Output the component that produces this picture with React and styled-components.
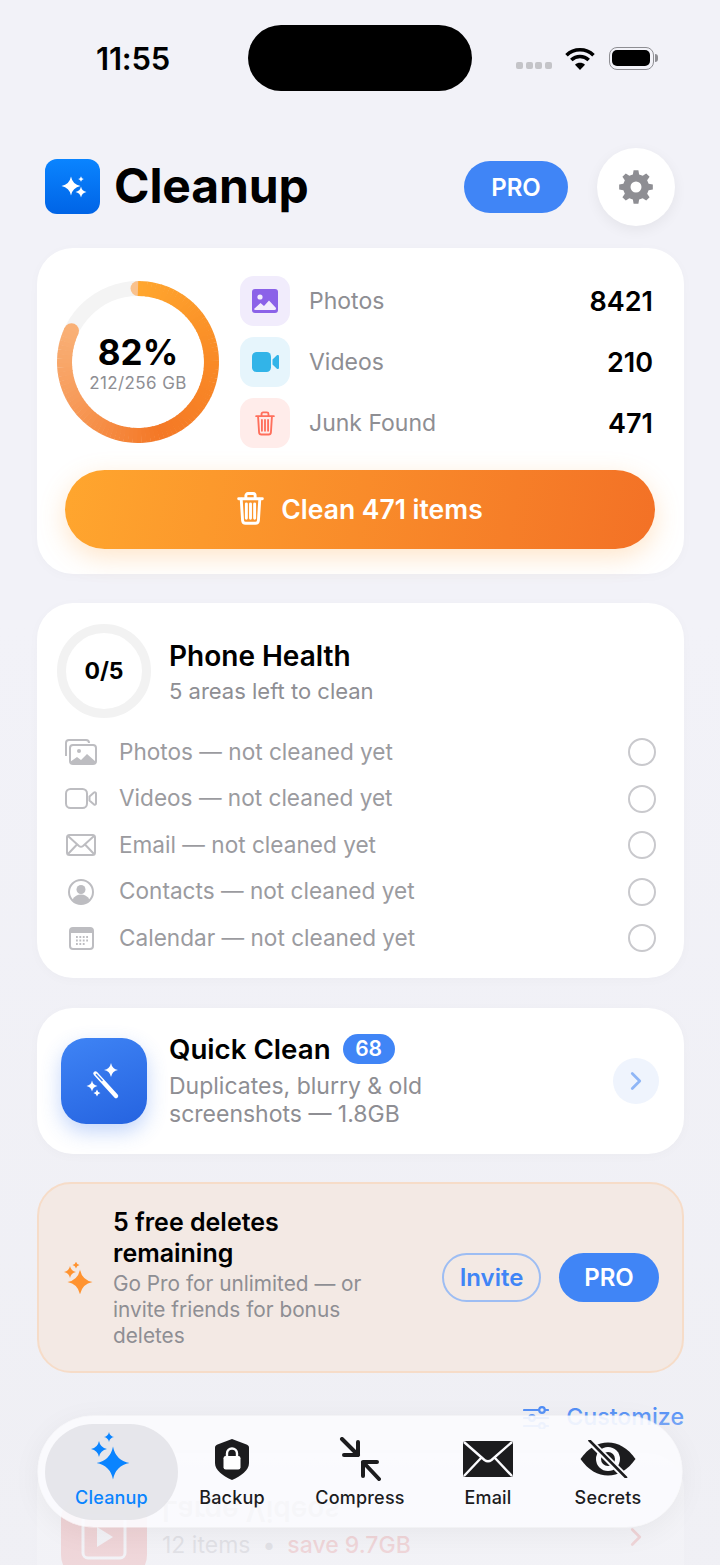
import React from 'react';
import styled, { createGlobalStyle } from 'styled-components';
import { ChevronRight } from 'lucide-react';

const GlobalStyle = createGlobalStyle`
  html, body {
    margin: 0;
    padding: 0;
    background: #f2f2f7;
    font-family: 'Inter', 'Liberation Sans', sans-serif;
    -webkit-font-smoothing: antialiased;
  }
  * { box-sizing: border-box; }
`;

const Screen = styled.div`
  position: relative;
  width: 720px;
  height: 1565px;
  overflow: hidden;
  background: linear-gradient(180deg, #f2f2f8 0%, #f2f2f8 40%, #efeff4 100%);
`;

/* status bar */
const StatusBar = styled.div`
  display: flex;
  align-items: center;
  height: 66px;
  margin-top: 25px;
  padding-left: 96px;
`;

const Time = styled.div`
  width: 74px;
  font-size: 31px;
  font-weight: 600;
  color: #000;
  white-space: nowrap;
  letter-spacing: -0.2px;
`;

const Island = styled.div`
  width: 224px;
  height: 66px;
  margin-left: 78px;
  margin-right: 44px;
  border-radius: 33px;
  background: #000;
`;

const SignalDots = styled.div`
  display: flex;
  gap: 2.5px;
  margin-top: 15px;
  margin-right: 13px;
`;

const SignalDot = styled.span`
  width: 7px;
  height: 7px;
  border-radius: 2px;
  background: #c4c4c8;
`;

const Battery = styled.div`
  display: flex;
  align-items: center;
  margin-left: 14px;
`;

const BatteryShell = styled.div`
  width: 45px;
  height: 23px;
  padding: 2.5px;
  border: 1.5px solid #8e8e93;
  border-radius: 8px;
`;

const BatteryFill = styled.div`
  width: 100%;
  height: 100%;
  border-radius: 5px;
  background: #000;
`;

const BatteryTip = styled.div`
  width: 3px;
  height: 8px;
  margin-left: 1px;
  border-radius: 0 3px 3px 0;
  background: #8e8e93;
`;

/* header */
const Header = styled.header`
  display: flex;
  align-items: center;
  height: 78px;
  margin-top: 57px;
  padding: 0 45px;
`;

const Logo = styled.div`
  display: flex;
  align-items: center;
  justify-content: center;
  width: 55px;
  height: 55px;
  margin-bottom: 2px;
  border-radius: 12px;
  background: linear-gradient(180deg, #0a84ff 0%, #0064e6 100%);
`;

const AppTitle = styled.h1`
  margin: 0 0 4px 14px;
  font-size: 48px;
  font-weight: 700;
  letter-spacing: -0.1px;
  color: #000;
`;

const ProPill = styled.button`
  width: ${(p) => p.$width}px;
  height: ${(p) => p.$height}px;
  margin-left: ${(p) => p.$auto ? 'auto' : '0'};
  padding: 0;
  border: none;
  border-radius: 26px;
  background: #4085f6;
  color: #fff;
  font-family: inherit;
  font-size: 24px;
  font-weight: 600;
`;

const GearButton = styled.div`
  display: flex;
  align-items: center;
  justify-content: center;
  width: 78px;
  height: 78px;
  margin-left: 29px;
  border-radius: 50%;
  background: #fff;
  box-shadow: 0 4px 14px rgba(0, 0, 0, 0.06);
`;

/* cards */
const Stack = styled.main`
  display: flex;
  flex-direction: column;
  gap: 29px;
  margin-top: 22px;
  padding: 0 36px 0 37px;
`;

const Card = styled.section`
  border-radius: 36px;
  background: #fff;
  box-shadow: 0 2px 12px rgba(0, 0, 0, 0.025);
`;

const StorageCard = styled(Card)`
  height: 326px;
  padding: 28px 29px 0 28px;
`;

const StorageTop = styled.div`
  display: flex;
  align-items: center;
  margin-left: -8px;
  padding-right: 2px;
`;

const RingBox = styled.div`
  position: relative;
  flex: none;
  width: ${(p) => p.$size}px;
  height: ${(p) => p.$size}px;
`;

const RingCenter = styled.div`
  position: absolute;
  inset: 0;
  display: flex;
  flex-direction: column;
  align-items: center;
  justify-content: center;
`;

const Percent = styled.div`
  font-size: 35px;
  line-height: 42px;
  font-weight: 700;
  color: #000;
`;

const UsedText = styled.div`
  font-size: 17px;
  line-height: 20px;
  color: #8e8e93;
  letter-spacing: 0.4px;
`;

const Stats = styled.div`
  display: flex;
  flex-direction: column;
  gap: 11px;
  flex: 1;
  margin-left: 21px;
`;

const StatRow = styled.div`
  display: flex;
  align-items: center;
  height: 50px;
`;

const StatTile = styled.div`
  display: flex;
  align-items: center;
  justify-content: center;
  width: 50px;
  height: 50px;
  border-radius: 14px;
  background: ${(p) => p.$bg};
`;

const StatLabel = styled.div`
  margin-left: 19px;
  font-size: 23px;
  color: #8e8e93;
`;

const StatValue = styled.div`
  margin-left: auto;
  font-size: 27px;
  font-weight: 600;
  color: #000;
`;

const CleanButton = styled.button`
  display: flex;
  align-items: center;
  justify-content: center;
  gap: 17px;
  width: 590px;
  height: 79px;
  margin-top: 22px;
  padding: 0 0 2px;
  border: none;
  border-radius: 40px;
  background: linear-gradient(100deg, #ffa62e 0%, #f37126 100%);
  box-shadow: 0 8px 26px rgba(255, 160, 60, 0.28);
  color: #fff;
  font-family: inherit;
  font-size: 26.5px;
  font-weight: 600;
`;

const HealthCard = styled(Card)`
  height: 375px;
  padding: 21px 28px 0 20px;
`;

const HealthTop = styled.div`
  display: flex;
  align-items: center;
  gap: 18px;
`;

const SmallRing = styled.div`
  display: flex;
  align-items: center;
  justify-content: center;
  width: 94px;
  height: 94px;
  border: 9px solid #f2f2f2;
  border-radius: 50%;
  font-size: 23px;
  font-weight: 700;
  color: #000;
`;

const CardTitle = styled.div`
  font-size: 28px;
  line-height: 34px;
  font-weight: 600;
  color: #000;
`;

const HealthSub = styled.div`
  margin-top: 6px;
  font-size: 22px;
  line-height: 25px;
  color: #8e8e93;
`;

const HealthList = styled.div`
  margin-top: 11px;
  padding-left: 8px;
`;

const HealthRow = styled.div`
  display: flex;
  align-items: center;
  height: 46.5px;
`;

const HealthIcon = styled.div`
  display: flex;
  align-items: center;
  justify-content: center;
  width: 32px;
`;

const HealthText = styled.div`
  margin-left: 22px;
  padding-bottom: 2px;
  font-size: 22.6px;
  color: #9b9b9f;
`;

const Radio = styled.div`
  width: 28px;
  height: 28px;
  margin-left: auto;
  border: 2px solid #c9c9cd;
  border-radius: 50%;
`;

const QuickCard = styled(Card)`
  display: flex;
  align-items: center;
  height: 146px;
  margin-top: 1px;
  padding: 0 25px 0 24px;
`;

const QuickIcon = styled.div`
  display: flex;
  align-items: center;
  justify-content: center;
  flex: none;
  width: 86px;
  height: 86px;
  border-radius: 25px;
  background: linear-gradient(160deg, #3f84f5 0%, #2563e0 100%);
  box-shadow: 0 8px 20px rgba(60, 120, 240, 0.3);
`;

const QuickBody = styled.div`
  margin-left: 22px;
`;

const TitleRow = styled.div`
  display: flex;
  align-items: center;
  gap: 12px;
  margin-top: -3px;
`;

const QuickTitle = styled(CardTitle)`
  font-size: 27.7px;
`;

const CountBadge = styled.span`
  display: flex;
  align-items: center;
  justify-content: center;
  width: 52px;
  height: 30px;
  border-radius: 15px;
  background: #4085f6;
  color: #fff;
  font-size: 21px;
  font-weight: 600;
`;

const QuickDesc = styled.div`
  margin-top: 6px;
  font-size: 23px;
  line-height: 28px;
  color: #8e8e93;
`;

const ChevronCircle = styled.div`
  display: flex;
  align-items: center;
  justify-content: center;
  width: 46px;
  height: 46px;
  margin-left: auto;
  margin-top: ${(p) => p.$plain ? '22px' : '0'};
  border-radius: 50%;
  background: ${(p) => p.$plain ? 'transparent' : '#eff4fd'};
  color: ${(p) => p.$plain ? '#e8413a' : '#8fb6f6'};
`;

const Banner = styled.section`
  display: flex;
  align-items: center;
  height: 191px;
  margin-top: -1px;
  padding: 0 23px 0 24px;
  border: 2px solid #f6dcc8;
  border-radius: 34px;
  background: #f3e9e4;
`;

const BannerBody = styled.div`
  width: 262px;
  margin-left: 18px;
`;

const BannerTitle = styled.div`
  font-size: 25px;
  line-height: 31px;
  font-weight: 600;
  color: #000;
`;

const BannerDesc = styled.div`
  margin-top: 2px;
  font-size: 20.8px;
  line-height: 26px;
  color: #8e8e93;
`;

const BannerActions = styled.div`
  display: flex;
  align-items: center;
  gap: 18px;
  margin-left: auto;
`;

const InviteButton = styled.button`
  width: 99px;
  height: 49px;
  padding: 0;
  border: 2px solid #9dbdf3;
  border-radius: 25px;
  background: transparent;
  color: #4085f6;
  font-family: inherit;
  font-size: 24px;
  font-weight: 600;
`;

const CustomizeRow = styled.div`
  display: flex;
  align-items: center;
  justify-content: flex-end;
  gap: 17px;
  height: 30px;
  color: #4a8af6;
  font-size: 23.2px;
  font-weight: 500;
`;

const LargeCard = styled(Card)`
  display: flex;
  align-items: center;
  height: 146px;
  margin-top: -8px;
  padding: 0 25px 0 24px;
`;

const LargeIcon = styled.div`
  display: flex;
  align-items: center;
  justify-content: center;
  flex: none;
  width: 86px;
  height: 86px;
  margin-top: 22px;
  border-radius: 25px;
  background: #e8413a;
`;

const LargeBody = styled.div`
  margin-left: 15px;
`;

const FlippedTitle = styled.div`
  font-size: 28px;
  line-height: 34px;
  font-weight: 600;
  color: #000;
  transform: scaleY(-1);
`;

const LargeMeta = styled.div`
  display: flex;
  align-items: center;
  gap: 12px;
  margin-top: 3px;
  font-size: 23px;
  color: #8e8e93;
`;

const Saving = styled.span`
  color: #e8413a;
  font-weight: 500;
`;

const FadeVeil = styled.div`
  position: absolute;
  left: 0;
  right: 0;
  bottom: 0;
  height: 160px;
  background: linear-gradient(180deg, rgba(240, 240, 245, 0) 0%, rgba(240, 240, 245, 0.35) 16%, rgba(240, 240, 245, 0.82) 60%, rgba(240, 240, 245, 0.86) 100%);
`;

/* floating tab bar */
const TabBar = styled.nav`
  position: absolute;
  left: 38px;
  top: 1416px;
  display: flex;
  width: 644px;
  height: 111px;
  padding: 8px 8px 7px 7px;
  border-radius: 56px;
  background: rgba(251, 251, 254, 0.9);
  box-shadow: 0 0 0 0.5px rgba(255, 255, 255, 0.8), 0 6px 30px rgba(0, 0, 0, 0.05);
`;

const Tab = styled.div`
  display: flex;
  flex-direction: column;
  align-items: center;
  flex: none;
  width: ${(p) => p.$width}px;
  padding-top: ${(p) => p.$active ? 8 : 14}px;
  border-radius: 48px;
  background: ${(p) => p.$active ? 'rgba(225, 225, 230, 0.8)' : 'transparent'};
  color: ${(p) => p.$active ? '#0a84ff' : '#1c1c1e'};
`;

const TabIcon = styled.div`
  display: flex;
  align-items: center;
  justify-content: center;
  height: ${(p) => p.$active ? 48 : 42}px;
`;

const TabLabel = styled.div`
  margin-top: 7px;
  font-size: 18px;
  line-height: 22px;
  font-weight: 500;
  letter-spacing: 0.2px;
`;

// four point sparkle, k is how far the waist sits from the centre
const star = (cx, cy, r, k = 0.16) => {
  const w = r * k;
  return `M${cx} ${cy - r}Q${cx + w} ${cy - w} ${cx + r} ${cy}Q${cx + w} ${cy + w} ${cx} ${cy + r}Q${cx - w} ${cy + w} ${cx - r} ${cy}Q${cx - w} ${cy - w} ${cx} ${cy - r}Z`;
};

const gearPath = () => {
  const teeth = 8;
  const c = 17;
  const points = [];
  for (let i = 0; i < teeth; i++) {
    const a = (i / teeth) * Math.PI * 2;
    const step = Math.PI / teeth;
    [[-0.62, 13], [-0.36, 17], [0.36, 17], [0.62, 13]].forEach(([off, r]) => {
      const t = a + off * step;
      points.push(`${(c + r * Math.sin(t)).toFixed(2)} ${(c - r * Math.cos(t)).toFixed(2)}`);
    });
  }
  const hole = `M${c - 5.5} ${c}a5.5 5.5 0 1 0 11 0a5.5 5.5 0 1 0 -11 0Z`;
  return `M${points.join('L')}Z${hole}`;
};

const Gear = () => (
  <svg width="34" height="34" viewBox="0 0 34 34">
    <path d={gearPath()} fill="#8e8e93" fillRule="evenodd" />
  </svg>
);

const Wifi = () => (
  <svg width="30" height="23" viewBox="0 0 30 23" fill="none" stroke="#000" strokeWidth="3.6">
    <path d="M1.5 8.2C9 1 21 1 28.5 8.2" />
    <path d="M6.3 13C11.2 8.3 18.8 8.3 23.7 13" />
    <path d="M15 23l-5-5.3c2.8-2.6 7.2-2.6 10 0z" fill="#000" stroke="none" />
  </svg>
);

const Sparkles = ({ size, box, color, stars }) => (
  <svg width={size} height={size} viewBox={`0 0 ${box} ${box}`}>
    {stars.map(([x, y, r], i) => <path key={i} d={star(x, y, r)} fill={color} />)}
  </svg>
);

const Trash = ({ width, height, color, strokeWidth }) => (
  <svg width={width} height={height} viewBox="0 0 26 32" fill="none" stroke={color} strokeWidth={strokeWidth} strokeLinecap="round" strokeLinejoin="round">
    <path d="M1.5 6.5h23" />
    <path d="M8.5 6V3.5a2 2 0 0 1 2-2h5a2 2 0 0 1 2 2V6" />
    <path d="M4 7l1.3 20.5a3 3 0 0 0 3 2.8h9.4a3 3 0 0 0 3-2.8L22 7" />
    <path d="M9 11.5v14M13 11.5v14M17 11.5v14" />
  </svg>
);

const PhotoGlyph = () => (
  <svg width="26" height="24" viewBox="0 0 26 24">
    <rect width="26" height="24" rx="3" fill="#8b62e8" />
    <circle cx="8" cy="8" r="2.6" fill="#f3eefc" />
    <path d="M2 20l6.5-6 3.5 3 5-5.5 7 7.5v.5a1.500 1.500 0 0 1-1.500 1.500h-19a1.500 1.500 0 0 1-1.500-1.500z" fill="#f3eefc" />
  </svg>
);

const VideoGlyph = () => (
  <svg width="27" height="20" viewBox="0 0 27 20" fill="#32b4e8">
    <rect width="19" height="20" rx="4.5" />
    <path d="M20.5 7.5l4.4-4.2c.8-.7 2.1-.2 2.1.9v11.6c0 1.1-1.3 1.6-2.1.9l-4.4-4.2z" />
  </svg>
);

const PhotosOutline = () => (
  <svg width="32" height="26" viewBox="0 0 32 26" fill="none" stroke="#bdbdc1" strokeWidth="2">
    <path d="M1 17V4a3 3 0 0 1 3-3h17a3 3 0 0 1 3 3" />
    <rect x="5" y="6" width="26" height="19" rx="3" />
    <circle cx="14" cy="12" r="2" fill="#bdbdc1" stroke="none" />
    <path d="M5 23l7-5 4 3 6-6 9 8v2H5z" fill="#bdbdc1" stroke="none" />
  </svg>
);

const VideoOutline = () => (
  <svg width="32" height="21" viewBox="0 0 32 21" fill="none" stroke="#bdbdc1" strokeWidth="2">
    <rect x="1" y="1" width="21" height="19" rx="4.5" />
    <path d="M24.5 8.5l4.5-4c.8-.6 2-.2 2 .9v10.200c0 1.100-1.200 1.500-2 .9l-4.500-4z" />
  </svg>
);

const MailOutline = () => (
  <svg width="30" height="22" viewBox="0 0 30 22" fill="none" stroke="#bdbdc1" strokeWidth="2">
    <rect x="1" y="1" width="28" height="20" rx="2.500" />
    <path d="M2 2l11 10q2 1.500 4 0L28 2M2 20l9-9.500M28 20l-9-9.500" />
  </svg>
);

const ContactOutline = () => (
  <svg width="26" height="26" viewBox="0 0 26 26">
    <circle cx="13" cy="13" r="12" fill="none" stroke="#bdbdc1" strokeWidth="2" />
    <circle cx="13" cy="10.500" r="4.500" fill="#bdbdc1" />
    <path d="M4.500 20.500c2-3.500 5-5 8.500-5s6.500 1.500 8.500 5C19 23.500 16 25 13 25s-6-1.500-8.500-4.500z" fill="#bdbdc1" />
  </svg>
);

const CalendarOutline = () => (
  <svg width="25" height="23" viewBox="0 0 25 23" fill="none">
    <rect x="1" y="1" width="23" height="21" rx="3" stroke="#bdbdc1" strokeWidth="2" />
    <path d="M1 6V4a3 3 0 0 1 3-3h17a3 3 0 0 1 3 3v2z" fill="#bdbdc1" />
    <path d="M7 10h12M7 13.500h12M7 17h9" stroke="#bdbdc1" strokeWidth="1.800" strokeDasharray="1.800 1.600" />
  </svg>
);

const Wand = () => (
  <svg width="40" height="40" viewBox="0 0 40 40">
    <path d="M11.500 12.500L32 35" stroke="#fff" strokeWidth="4.400" strokeLinecap="round" />
    <path d="M12 13l6.500 7" stroke="#3f80ee" strokeWidth="1.400" />
    <path d={star(27, 9, 7)} fill="#fff" />
    <path d={star(8, 25, 5.500)} fill="#fff" />
    <path d={star(13, 32, 3.500)} fill="#fff" />
  </svg>
);

const Sliders = () => (
  <svg width="26" height="24" viewBox="0 0 26 24" fill="none" stroke="#4a8af6" strokeWidth="2.200" strokeLinecap="round">
    <path d="M1 5h15M22 5h3M1 13h5M12 13h13M1 21h15M22 21h3" />
    <circle cx="19" cy="5" r="2.800" />
    <circle cx="9" cy="13" r="2.800" />
    <circle cx="19" cy="21" r="2.800" />
  </svg>
);

const Shield = () => (
  <svg width="34" height="41" viewBox="0 0 34 41">
    <path d="M17 0l14.500 5.500c1.500.6 2.500 1.500 2.500 3V24c0 7.500-8 13-17 17C8 37 0 31.500 0 24V8.500c0-1.500 1-2.400 2.500-3z" fill="#1c1c1e" />
    <rect x="8.500" y="17" width="17" height="13.500" rx="2.200" fill="#fff" />
    <path d="M12 18v-3.500a5 5 0 0 1 10 0V18" fill="none" stroke="#fff" strokeWidth="2.400" />
  </svg>
);

const CompressIcon = () => (
  <svg width="42" height="44" viewBox="0 0 42 44" fill="none" stroke="#1c1c1e" strokeWidth="4" strokeLinecap="round" strokeLinejoin="round">
    <path d="M3 2l16 16M19 5v13H5" />
    <path d="M40 42L24 25M24 39V25h14" />
  </svg>
);

const EnvelopeFilled = () => (
  <svg width="50" height="36" viewBox="0 0 50 36">
    <rect width="50" height="36" rx="2.500" fill="#1c1c1e" />
    <path d="M1 1l20.500 18q3.500 2.500 7 0L49 1M1 35l17.500-18.500M49 35L31.500 16.500" fill="none" stroke="#fbfbfe" strokeWidth="2.400" />
  </svg>
);

const EyeSlash = () => (
  <svg width="56" height="38" viewBox="0 0 56 38">
    <path d="M0.500 19C8 8 18 2.500 28 2.500S48 8 55.500 19C48 30 38 35.500 28 35.500S8 30 0.500 19z" fill="#1c1c1e" />
    <circle cx="28" cy="19" r="12" fill="#fbfbfe" />
    <circle cx="28" cy="19" r="7" fill="#1c1c1e" />
    <path d="M9 0.500L46 37.500" stroke="#fbfbfe" strokeWidth="6.500" />
    <path d="M9.500 0.500L46 37.500" stroke="#1c1c1e" strokeWidth="2.600" strokeLinecap="round" />
  </svg>
);

const PlayOutline = () => (
  <svg width="46" height="46" viewBox="0 0 46 46" fill="none" stroke="#fff" strokeWidth="3">
    <rect x="2" y="2" width="42" height="42" rx="5" />
    <path d="M16 13l16 10-16 10z" fill="#fff" stroke="none" />
  </svg>
);

// ring colours go around the arc, drawn as short segments since svg has no conic stroke
const ringStops = [
  [0, [255, 166, 46]],
  [0.3, [249, 138, 38]],
  [0.55, [244, 120, 38]],
  [0.8, [247, 155, 90]],
  [1, [249, 176, 118]],
];

const ringColor = (t) => {
  for (let i = 1; i < ringStops.length; i++) {
    const [t1, c1] = ringStops[i];
    const [t0, c0] = ringStops[i - 1];
    if (t <= t1) {
      const f = (t - t0) / (t1 - t0);
      return `rgb(${c0.map((v, n) => Math.round(v + (c1[n] - v) * f)).join(',')})`;
    }
  }
  return 'rgb(249,176,118)';
};

const StorageRing = ({ percent }) => {
  const size = 162;
  const r = 73.5;
  const c = size / 2;
  const total = 90;
  const point = (t) => {
    const a = t * (percent / 100) * Math.PI * 2;
    return [c + r * Math.sin(a), c - r * Math.cos(a)];
  };
  const segments = Array.from({ length: total }, (_, i) => {
    const [x0, y0] = point(i / total);
    const [x1, y1] = point(Math.min(1, (i + 1.15) / total));
    return <path key={i} d={`M${x0} ${y0}L${x1} ${y1}`} stroke={ringColor(i / total)} />;
  });
  const [ex, ey] = point(1);
  return (
    <svg width={size} height={size} viewBox={`0 0 ${size} ${size}`} fill="none" strokeWidth="15">
      <circle cx={c} cy={c} r={r} stroke="#f4f4f4" />
      <circle cx={ex} cy={ey} r="7.500" fill="rgb(249,176,118)" stroke="none" />
      <circle cx={c} cy={c - r} r="7.500" fill="#f9c28e" stroke="none" />
      {segments}
    </svg>
  );
};

const stats = [
  { label: 'Photos', value: '8421', bg: '#f1ecfc', icon: <PhotoGlyph /> },
  { label: 'Videos', value: '210', bg: '#e6f5fc', icon: <VideoGlyph /> },
  { label: 'Junk Found', value: '471', bg: '#ffecea', icon: <Trash width={20} height={25} color="#ff6f5c" strokeWidth={2.4} /> },
];

const healthItems = [
  { label: 'Photos', icon: <PhotosOutline /> },
  { label: 'Videos', icon: <VideoOutline /> },
  { label: 'Email', icon: <MailOutline /> },
  { label: 'Contacts', icon: <ContactOutline /> },
  { label: 'Calendar', icon: <CalendarOutline /> },
];

const tabs = [
  { label: 'Backup', width: 108, icon: <Shield /> },
  { label: 'Compress', width: 148, icon: <CompressIcon /> },
  { label: 'Email', width: 108, icon: <EnvelopeFilled /> },
  { label: 'Secrets', width: 132, icon: <EyeSlash /> },
];

const App = () => {
  return (
    <Screen>
      <GlobalStyle />
      <StatusBar>
        <Time>11:55</Time>
        <Island />
        <SignalDots>
          {[0, 1, 2, 3].map((i) => <SignalDot key={i} />)}
        </SignalDots>
        <Wifi />
        <Battery>
          <BatteryShell><BatteryFill /></BatteryShell>
          <BatteryTip />
        </Battery>
      </StatusBar>

      <Header>
        <Logo>
          <Sparkles size={32} box={32} color="#fff" stars={[[14, 16, 9.5], [24, 22, 5.5], [24, 9, 2.8]]} />
        </Logo>
        <AppTitle>Cleanup</AppTitle>
        <ProPill $auto $width={104} $height={52}>PRO</ProPill>
        <GearButton><Gear /></GearButton>
      </Header>

      <Stack>
        <StorageCard>
          <StorageTop>
            <RingBox $size={162}>
              <StorageRing percent={82} />
              <RingCenter>
                <Percent>82%</Percent>
                <UsedText>212/256 GB</UsedText>
              </RingCenter>
            </RingBox>
            <Stats>
              {stats.map((s) => (
                <StatRow key={s.label}>
                  <StatTile $bg={s.bg}>{s.icon}</StatTile>
                  <StatLabel>{s.label}</StatLabel>
                  <StatValue>{s.value}</StatValue>
                </StatRow>
              ))}
            </Stats>
          </StorageTop>
          <CleanButton>
            <Trash width={27} height={33} color="#fff" strokeWidth={2.8} />
            Clean 471 items
          </CleanButton>
        </StorageCard>

        <HealthCard>
          <HealthTop>
            <SmallRing>0/5</SmallRing>
            <div>
              <CardTitle>Phone Health</CardTitle>
              <HealthSub>5 areas left to clean</HealthSub>
            </div>
          </HealthTop>
          <HealthList>
            {healthItems.map((item) => (
              <HealthRow key={item.label}>
                <HealthIcon>{item.icon}</HealthIcon>
                <HealthText>{item.label} — not cleaned yet</HealthText>
                <Radio />
              </HealthRow>
            ))}
          </HealthList>
        </HealthCard>

        <QuickCard>
          <QuickIcon><Wand /></QuickIcon>
          <QuickBody>
            <TitleRow>
              <QuickTitle>Quick Clean</QuickTitle>
              <CountBadge>68</CountBadge>
            </TitleRow>
            <QuickDesc>Duplicates, blurry &amp; old<br />screenshots — 1.8GB</QuickDesc>
          </QuickBody>
          <ChevronCircle><ChevronRight size={30} strokeWidth={2.2} /></ChevronCircle>
        </QuickCard>

        <Banner>
          <Sparkles size={32} box={32} color="#ff9330" stars={[[17, 20, 12.5], [7, 10, 6], [13, 3, 3.5]]} />
          <BannerBody>
            <BannerTitle>5 free deletes remaining</BannerTitle>
            <BannerDesc>Go Pro for unlimited — or invite friends for bonus deletes</BannerDesc>
          </BannerBody>
          <BannerActions>
            <InviteButton>Invite</InviteButton>
            <ProPill $width={100} $height={49}>PRO</ProPill>
          </BannerActions>
        </Banner>

        <CustomizeRow>
          <Sliders />
          Customize
        </CustomizeRow>

        <LargeCard>
          <LargeIcon><PlayOutline /></LargeIcon>
          <LargeBody>
            <FlippedTitle>Large Videos</FlippedTitle>
            <LargeMeta>
              12 items <span>•</span> <Saving>save 9.7GB</Saving>
            </LargeMeta>
          </LargeBody>
          <ChevronCircle $plain><ChevronRight size={30} strokeWidth={2.2} /></ChevronCircle>
        </LargeCard>
      </Stack>

      <FadeVeil />

      <TabBar>
        <Tab $active $width={133}>
          <TabIcon $active>
            <Sparkles size={48} box={48} color="#0a84ff" stars={[[25, 31, 16.5], [11, 17, 8], [21, 5, 5]]} />
          </TabIcon>
          <TabLabel>Cleanup</TabLabel>
        </Tab>
        {tabs.map((t) => (
          <Tab key={t.label} $width={t.width}>
            <TabIcon>{t.icon}</TabIcon>
            <TabLabel>{t.label}</TabLabel>
          </Tab>
        ))}
      </TabBar>
    </Screen>
  );
};

export default App;
